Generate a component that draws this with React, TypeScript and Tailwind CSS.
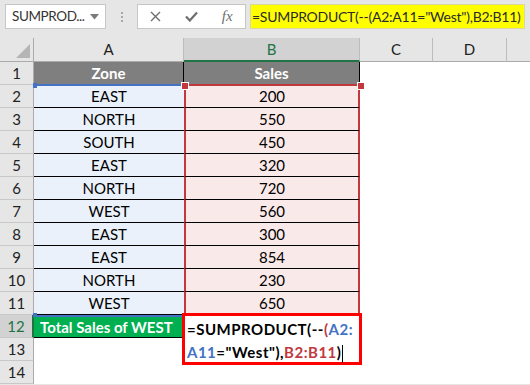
import React from "react";

const FONT = { fontFamily: "Lato, 'Open Sans', 'Liberation Sans', sans-serif" };

const zones = [
  ["EAST", "200"],
  ["NORTH", "550"],
  ["SOUTH", "450"],
  ["EAST", "320"],
  ["NORTH", "720"],
  ["WEST", "560"],
  ["EAST", "300"],
  ["EAST", "854"],
  ["NORTH", "230"],
  ["WEST", "650"],
];

function RowHead({ n, active }: { n: number; active?: boolean }) {
  return (
    <div
      className={
        active
          ? "h-[23px] flex items-center justify-center bg-[#d2d2d2] text-[#217346] border-b border-[#c8c8c8] border-r-2 border-r-[#217346] text-[15px]"
          : "h-[23px] flex items-center justify-center bg-[#e6e6e6] text-[#222] border-b border-[#c8c8c8] border-r border-r-[#ababab] text-[15px]"
      }
    >
      {n}
    </div>
  );
}

export default function App() {
  return (
    <div className="w-[530px] h-[385px] overflow-hidden bg-[#e6e6e6] relative" style={FONT}>
      {/* toolbar */}
      <div className="h-[38px] flex items-start pt-[4px]">
        <div className="ml-[5px] w-[101px] h-[25px] bg-white border border-[#c6c6c6] flex items-center pl-[6px] pr-[6px] text-[13.5px] text-[#333]">
          <span className="flex-1 tracking-[-0.4px] whitespace-nowrap">SUMPROD...</span>
          <svg width="9" height="6" viewBox="0 0 9 6">
            <path d="M0 0 L9 0 L4.5 5.5 Z" fill="#7a7a7a" />
          </svg>
        </div>
        <div className="w-[31px] h-[25px] flex flex-col items-center justify-center gap-[2px]">
          <div className="w-[2px] h-[2px] bg-[#a8a8a8]" />
          <div className="w-[2px] h-[2px] bg-[#a8a8a8]" />
          <div className="w-[2px] h-[2px] bg-[#a8a8a8]" />
        </div>
        <div className="w-[109px] h-[25px] bg-white border border-[#c6c6c6] flex items-center">
          <div className="w-[36px] flex justify-center">
            <svg width="11" height="11" viewBox="0 0 11 11">
              <path d="M1 1 L10 10 M10 1 L1 10" stroke="#6e6e6e" strokeWidth="1.4" />
            </svg>
          </div>
          <div className="w-[36px] flex justify-center">
            <svg width="13" height="11" viewBox="0 0 13 11">
              <path d="M1 5.5 L4.8 9.5 L12 1.5" stroke="#6e6e6e" strokeWidth="2.2" fill="none" />
            </svg>
          </div>
          <div className="w-[36px] flex justify-center">
            <span className="italic text-[15px] text-[#6e6e6e]" style={{ fontFamily: "'Liberation Serif', 'DejaVu Serif', serif" }}>
              fx
            </span>
          </div>
        </div>
        <div className="ml-[4px] w-[275px] h-[25px] bg-[#ffff00] border border-[#d8d8a0] flex items-center pl-[1px] text-[14px] text-[#2b2b2b] whitespace-nowrap overflow-hidden tracking-[-0.25px]">
          =SUMPRODUCT(--(A2:A11="West"),B2:B11)
        </div>
      </div>

      {/* sheet */}
      <div className="grid grid-cols-[34px_150px_176px_73px_74px_1fr]">
        {/* column headers */}
        <div className="h-[24px] bg-[#e6e6e6] border-r border-[#ababab] border-b border-b-[#ababab] relative">
          <svg className="absolute right-[3px] bottom-[3px]" width="14" height="14" viewBox="0 0 14 14">
            <path d="M14 0 L14 14 L0 14 Z" fill="#b5b5b5" />
          </svg>
        </div>
        <div className="h-[24px] bg-[#e6e6e6] border-r border-[#bcbcbc] border-b border-b-[#ababab] flex items-center justify-center text-[15px] text-[#222]">A</div>
        <div className="h-[24px] bg-[#d2d2d2] border-r border-[#bcbcbc] border-b-2 border-b-[#217346] flex items-center justify-center text-[15px] text-[#217346]">B</div>
        <div className="h-[24px] bg-[#e6e6e6] border-r border-[#bcbcbc] border-b border-b-[#ababab] flex items-center justify-center text-[15px] text-[#222]">C</div>
        <div className="h-[24px] bg-[#e6e6e6] border-r border-[#bcbcbc] border-b border-b-[#ababab] flex items-center justify-center text-[15px] text-[#222]">D</div>
        <div className="h-[24px] bg-[#e6e6e6] border-b border-b-[#ababab]" />

        {/* row 1 */}
        <RowHead n={1} />
        <div className="h-[23px] bg-[#7f7f7f] border-r border-black flex items-center justify-center text-white font-bold text-[15px]">Zone</div>
        <div className="h-[23px] bg-[#7f7f7f] border-r border-black flex items-center justify-center text-white font-bold text-[15px]">Sales</div>
        <div className="h-[23px] bg-white" />
        <div className="h-[23px] bg-white" />
        <div className="h-[23px] bg-white" />

        {zones.map(([z, s], i) => (
          <React.Fragment key={i}>
            <RowHead n={i + 2} />
            <div className="h-[23px] bg-[#eaf1fa] border-b border-black flex items-center justify-center text-[15px] text-black">{z}</div>
            <div className="h-[23px] bg-[#fae9e9] border-b border-black border-l-2 border-l-[#c0393f] border-r-2 border-r-[#c0393f] flex items-center justify-center text-[15px] text-black">{s}</div>
            <div className="h-[23px] bg-white" />
            <div className="h-[23px] bg-white" />
            <div className="h-[23px] bg-white" />
          </React.Fragment>
        ))}

        {/* row 12 */}
        <RowHead n={12} active />
        <div className="h-[23px] bg-[#00b050] border-b border-black border-t-2 border-t-[#4472c4] flex items-center pl-[6px] text-[15px] font-bold text-white whitespace-nowrap">
          Total Sales of WEST
        </div>
        <div className="h-[23px] bg-white" />
        <div className="h-[23px] bg-white" />
        <div className="h-[23px] bg-white" />
        <div className="h-[23px] bg-white" />

        {[13, 14].map((n) => (
          <React.Fragment key={n}>
            <RowHead n={n} />
            <div className="h-[23px] bg-white" />
            <div className="h-[23px] bg-white" />
            <div className="h-[23px] bg-white" />
            <div className="h-[23px] bg-white" />
            <div className="h-[23px] bg-white" />
          </React.Fragment>
        ))}
      </div>

      {/* range highlights */}
      <div className="absolute left-[34px] top-[84px] w-[150px] h-[2px] bg-[#4472c4]" />
      <div className="absolute left-[33px] top-[83px] w-[4px] h-[5px] bg-[#4472c4]" />
      <div className="absolute left-[33px] top-[313px] w-[4px] h-[4px] bg-[#4472c4]" />
      <div className="absolute left-[184px] top-[84px] w-[176px] h-[2px] bg-[#c0393f]" />
      <div className="absolute left-[181px] top-[82px] w-[6px] h-[6px] bg-[#c0393f] border border-white box-content" />
      <div className="absolute left-[357px] top-[82px] w-[6px] h-[6px] bg-[#c0393f] border border-white box-content" />

      {/* edit box */}
      <div className="absolute left-[182px] top-[313px] w-[180px] h-[52px] bg-white border-[3px] border-[#ff0000] pl-[2px] pt-[2px] text-[15px] font-bold leading-[23px] text-black whitespace-nowrap tracking-[0.5px]">
        <div>
          =SUMPRODUCT(--<span className="text-[#c0393f]">(</span>
          <span className="text-[#4472c4]">A2:</span>
        </div>
        <div>
          <span className="text-[#4472c4]">A11</span>="West"),<span className="text-[#c0393f]">B2:B11</span>)
          <span className="inline-block w-[1px] h-[18px] bg-black align-middle ml-[1px]" />
        </div>
      </div>
    </div>
  );
}
